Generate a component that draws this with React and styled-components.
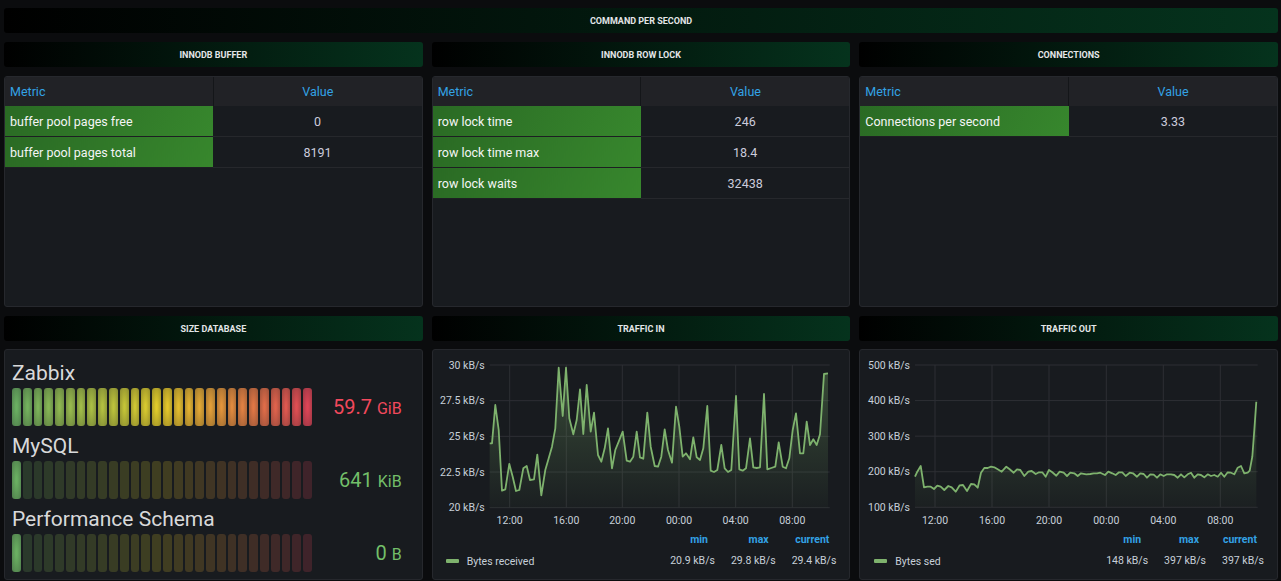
import React from "react";
import styled, { createGlobalStyle } from "styled-components";

const GlobalStyle = createGlobalStyle`
  html, body {
    margin: 0;
    background: #0b0c0e;
    overflow: hidden;
  }
  body {
    font-family: Roboto, "Liberation Sans", sans-serif;
    color: #ccccdc;
  }
`;

// points read off the reference, in 3x zoom coordinates
const inRaw = [
  185,310, 192,310, 202,195, 212,270, 222,452, 232,448, 244,372, 254,410, 264,453, 274,450,
  286,385, 296,378, 306,420, 318,418, 328,344, 340,466, 352,390, 362,355, 372,320, 382,265,
  392,83, 404,228, 414,83, 424,235, 436,283, 446,240, 456,148, 466,282, 476,135, 488,275,
  498,218, 510,345, 520,365, 530,325, 540,265, 552,385, 562,330, 572,305, 584,275, 596,362,
  606,365, 616,350, 626,275, 636,352, 646,356, 658,218, 668,320, 680,378, 690,380, 700,350,
  710,268, 720,330, 732,368, 744,200, 754,260, 764,350, 774,340, 786,358, 796,292, 806,352,
  816,360, 826,325, 838,198, 848,392, 858,396, 868,390, 880,315, 890,385, 900,396, 910,390,
  924,168, 934,388, 944,392, 954,385, 966,295, 976,382, 986,384, 996,382, 1008,162, 1018,388,
  1030,384, 1042,380, 1052,307, 1064,380, 1074,385, 1084,355, 1094,270, 1104,220, 1116,340,
  1126,340, 1136,245, 1146,315, 1156,298, 1166,315, 1176,283, 1188,102, 1200,100,
];

const outRaw = [
  180,410, 187,395, 197,378, 207,442, 217,440, 227,440, 237,447, 247,437, 257,440, 268,450,
  280,438, 290,442, 302,455, 314,436, 324,435, 336,453, 348,432, 358,433, 368,443, 378,398,
  388,384, 398,384, 408,380, 418,382, 428,388, 440,395, 454,380, 464,388, 476,398, 486,388,
  496,390, 508,408, 520,395, 530,393, 542,402, 552,397, 562,397, 572,410, 582,390, 592,397,
  604,407, 614,395, 626,398, 636,408, 646,398, 658,400, 668,408, 678,400, 694,403, 706,402,
  716,400, 726,400, 736,398, 750,405, 760,395, 772,400, 782,405, 792,397, 802,397, 812,408,
  824,398, 834,400, 846,410, 856,400, 866,402, 876,413, 886,403, 896,404, 906,413, 916,403,
  926,408, 936,403, 948,403, 958,405, 968,413, 978,403, 988,412, 998,403, 1008,398, 1018,413,
  1028,403, 1038,405, 1048,412, 1058,403, 1068,408, 1078,405, 1088,410, 1098,398, 1108,410,
  1118,397, 1128,398, 1138,403, 1148,383, 1158,378, 1168,400, 1178,398, 1184,392, 1192,350,
  1198,270, 1204,185,
];

const toLocal = (raw) => {
  const pts = [];
  for (let i = 0; i < raw.length; i += 2) {
    pts.push([raw[i] / 3 - 5, raw[i + 1] / 3 - 10]);
  }
  return pts;
};

const timeLabels = ["12:00", "16:00", "20:00", "00:00", "04:00", "08:00"];

const trafficIn = {
  id: "fillIn",
  plot: { left: 56.7, right: 396.7, top: 15, bottom: 157.7 },
  yLabels: ["30 kB/s", "27.5 kB/s", "25 kB/s", "22.5 kB/s", "20 kB/s"],
  xTicks: [76.7, 133.3, 189.3, 246, 302.7, 359.3],
  points: toLocal(inRaw),
  series: "Bytes received",
  stats: ["20.9 kB/s", "29.8 kB/s", "29.4 kB/s"],
};

const trafficOut = {
  id: "fillOut",
  plot: { left: 55, right: 397.7, top: 15, bottom: 157.3 },
  yLabels: ["500 kB/s", "400 kB/s", "300 kB/s", "200 kB/s", "100 kB/s"],
  xTicks: [75, 132, 189, 246.3, 303.3, 360.3],
  points: toLocal(outRaw),
  series: "Bytes sed",
  stats: ["148 kB/s", "397 kB/s", "397 kB/s"],
};

const tables = [
  {
    title: "INNODB BUFFER",
    rows: [
      ["buffer pool pages free", "0"],
      ["buffer pool pages total", "8191"],
    ],
  },
  {
    title: "INNODB ROW LOCK",
    rows: [
      ["row lock time", "246"],
      ["row lock time max", "18.4"],
      ["row lock waits", "32438"],
    ],
  },
  {
    title: "CONNECTIONS",
    rows: [["Connections per second", "3.33"]],
  },
];

const gauges = [
  { name: "Zabbix", value: "59.7", unit: "GiB", lit: 28, color: "#f2495c" },
  { name: "MySQL", value: "641", unit: "KiB", lit: 1, color: "#73bf69" },
  { name: "Performance Schema", value: "0", unit: "B", lit: 1, color: "#73bf69" },
];

const CELLS = 28;
const stops = [
  [115, 191, 105],
  [250, 222, 42],
  [242, 73, 92],
];

function cellRgb(i) {
  const t = i / (CELLS - 1);
  const seg = t < 0.5 ? 0 : 1;
  const f = t < 0.5 ? t * 2 : (t - 0.5) * 2;
  const a = stops[seg];
  const b = stops[seg + 1];
  return a.map((v, k) => Math.round(v + (b[k] - v) * f)).join(",");
}

const Page = styled.div`
  box-sizing: border-box;
  width: 1281px;
  height: 581px;
  padding: 8px 3px 0 4px;
  display: flex;
  flex-direction: column;
  gap: 9px;
`;

const TitleBar = styled.div`
  height: 25px;
  border-radius: 3px;
  background: linear-gradient(90deg, #000000 0%, #05331d 100%);
  display: flex;
  align-items: center;
  justify-content: center;
  font-size: 9px;
  font-weight: 700;
  color: #e4e6e8;
`;

const Row = styled.div`
  display: grid;
  grid-template-columns: repeat(3, 1fr);
  grid-template-rows: 25px 231px;
  column-gap: 9px;
  row-gap: ${(p) => p.$rowGap}px;
`;

const Panel = styled.div`
  box-sizing: border-box;
  background: #181b1f;
  border: 1px solid #26282d;
  border-radius: 3px;
  overflow: hidden;
`;

const Table = styled.table`
  width: 100%;
  border-collapse: collapse;
  table-layout: fixed;
  font-size: 12.5px;
`;

const Th = styled.th`
  height: 29px;
  padding: 0 5px;
  background: #212226;
  color: #33a2e5;
  font-weight: 400;
  text-align: ${(p) => p.$align};
  &:first-child {
    border-right: 1px solid #141619;
  }
`;

const MetricCell = styled.td`
  height: 30px;
  padding: 0 5px;
  background: linear-gradient(120deg, #2a6a24, #37872d);
  color: #f4f5f5;
  border-bottom: 1px solid #1d1f22;
  white-space: nowrap;
`;

const ValueCell = styled.td`
  height: 30px;
  padding: 0 6px;
  text-align: center;
  color: #ccccdc;
  border-bottom: 1px solid #26282c;
`;

const GaugeList = styled.div`
  padding: 11px 7px 0 7px;
  display: flex;
  flex-direction: column;
  gap: 8px;
`;

const GaugeName = styled.div`
  height: 24px;
  line-height: 24px;
  margin-bottom: 3px;
  font-size: 21px;
  color: #d8d9da;
  white-space: nowrap;
`;

const GaugeRow = styled.div`
  display: flex;
  align-items: center;
`;

const Cells = styled.div`
  width: 300px;
  height: 38px;
  display: flex;
  gap: 2px;
`;

const Cell = styled.div`
  flex: 1;
  border-radius: 3px;
  background: ${(p) =>
    p.$lit
      ? `radial-gradient(rgba(${p.$rgb},0.9) 10%, rgba(${p.$rgb},0.6))`
      : `rgba(${p.$rgb},0.18)`};
`;

const GaugeValue = styled.div`
  flex: 1;
  text-align: right;
  padding-right: 13px;
  font-size: 20px;
  color: ${(p) => p.$color};
  white-space: nowrap;
`;

const Unit = styled.span`
  font-size: 16px;
`;

const ChartPanel = styled(Panel)`
  display: flex;
  flex-direction: column;
`;

const AxisText = styled.text`
  font-family: Roboto, "Liberation Sans", sans-serif;
  font-size: 10.5px;
  fill: #c7d0d9;
`;

const Legend = styled.table`
  margin: -1px 13px 0;
  border-collapse: collapse;
  font-size: 10.5px;
  color: #c7d0d9;
`;

const LegendHead = styled.th`
  height: 21px;
  padding: 0 7px 0 16px;
  text-align: right;
  color: #33a2e5;
  font-weight: 700;
  white-space: nowrap;
`;

const LegendValue = styled.td`
  height: 21px;
  padding: 0 0 0 16px;
  text-align: right;
  white-space: nowrap;
`;

const SeriesCell = styled.td`
  width: 100%;
  white-space: nowrap;
`;

const Series = styled.span`
  display: inline-flex;
  align-items: center;
  gap: 8px;
  margin-left: ${(p) => p.$offset}px;
`;

const Swatch = styled.span`
  width: 13px;
  height: 4px;
  border-radius: 1px;
  background: #7eb26d;
`;

function MetricTable({ rows }) {
  return (
    <Panel>
      <Table>
        <thead>
          <tr>
            <Th $align="left">Metric</Th>
            <Th $align="center">Value</Th>
          </tr>
        </thead>
        <tbody>
          {rows.map(([name, value]) => (
            <tr key={name}>
              <MetricCell>{name}</MetricCell>
              <ValueCell>{value}</ValueCell>
            </tr>
          ))}
        </tbody>
      </Table>
    </Panel>
  );
}

function SizeGauges() {
  return (
    <Panel>
      <GaugeList>
        {gauges.map((g) => (
          <div key={g.name}>
            <GaugeName>{g.name}</GaugeName>
            <GaugeRow>
              <Cells>
                {Array.from({ length: CELLS }, (_, i) => (
                  <Cell key={i} $rgb={cellRgb(i)} $lit={i < g.lit} />
                ))}
              </Cells>
              <GaugeValue $color={g.color}>
                {g.value} <Unit>{g.unit}</Unit>
              </GaugeValue>
            </GaugeRow>
          </div>
        ))}
      </GaugeList>
    </Panel>
  );
}

function TimeChart({ cfg, offset }) {
  const { plot, points, id } = cfg;
  const step = (plot.bottom - plot.top) / 4;
  const line = points.map(([x, y]) => `${x.toFixed(1)},${y.toFixed(1)}`).join(" ");
  const first = points[0];
  const last = points[points.length - 1];
  const area = `M${first[0]},${plot.bottom} L${line.split(" ").join(" L")} L${last[0]},${plot.bottom} Z`;

  return (
    <ChartPanel>
      <svg width="417" height="180" style={{ display: "block" }}>
        <defs>
          <linearGradient id={id} x1="0" y1={plot.top} x2="0" y2={plot.bottom} gradientUnits="userSpaceOnUse">
            <stop offset="0%" stopColor="#7eb26d" stopOpacity="0.32" />
            <stop offset="100%" stopColor="#7eb26d" stopOpacity="0.03" />
          </linearGradient>
        </defs>
        {cfg.yLabels.map((label, i) => {
          const y = plot.top + i * step;
          return (
            <g key={label}>
              <line x1={plot.left} x2={plot.right} y1={y} y2={y} stroke="#2d2f34" strokeWidth="1" />
              <AxisText x={plot.left - 5} y={y + 3.7} textAnchor="end">
                {label}
              </AxisText>
            </g>
          );
        })}
        {cfg.xTicks.map((x, i) => (
          <g key={x}>
            <line x1={x} x2={x} y1={plot.top} y2={plot.bottom} stroke="#2d2f34" strokeWidth="1" />
            <AxisText x={x} y={173.7} textAnchor="middle">
              {timeLabels[i]}
            </AxisText>
          </g>
        ))}
        <path d={area} fill={`url(#${id})`} />
        <polyline points={line} fill="none" stroke="#7eb26d" strokeWidth="1.8" strokeLinejoin="round" />
      </svg>
      <Legend>
        <thead>
          <tr>
            <th />
            <LegendHead>min</LegendHead>
            <LegendHead>max</LegendHead>
            <LegendHead>current</LegendHead>
          </tr>
        </thead>
        <tbody>
          <tr>
            <SeriesCell>
              <Series $offset={offset}>
                <Swatch />
                {cfg.series}
              </Series>
            </SeriesCell>
            {cfg.stats.map((s, i) => (
              <LegendValue key={i}>{s}</LegendValue>
            ))}
          </tr>
        </tbody>
      </Legend>
    </ChartPanel>
  );
}

export default function App() {
  return (
    <>
      <GlobalStyle />
      <Page>
        <TitleBar>COMMAND PER SECOND</TitleBar>
        <Row $rowGap={9}>
          {tables.map((t) => (
            <TitleBar key={t.title}>{t.title}</TitleBar>
          ))}
          {tables.map((t) => (
            <MetricTable key={t.title} rows={t.rows} />
          ))}
        </Row>
        <Row $rowGap={8}>
          <TitleBar>SIZE DATABASE</TitleBar>
          <TitleBar>TRAFFIC IN</TitleBar>
          <TitleBar>TRAFFIC OUT</TitleBar>
          <SizeGauges />
          <TimeChart cfg={trafficIn} offset={-1} />
          <TimeChart cfg={trafficOut} offset={0} />
        </Row>
      </Page>
    </>
  );
}
